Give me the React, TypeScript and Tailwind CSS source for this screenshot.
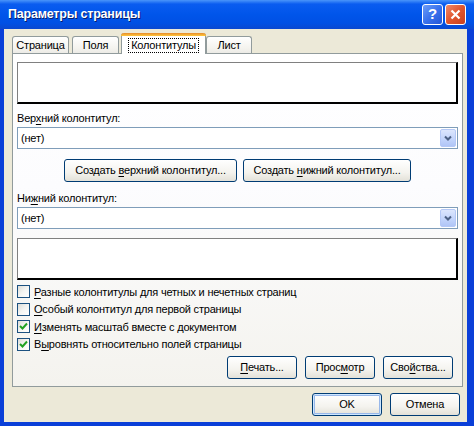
import React from "react";

const font = "font-['Liberation_Sans',Arial,sans-serif]";

function U({ children }: { children: React.ReactNode }) {
  return <span className="underline underline-offset-2">{children}</span>;
}

function XpButton({
  children,
  className = "",
  isDefault = false,
}: {
  children: React.ReactNode;
  className?: string;
  isDefault?: boolean;
}) {
  return (
    <div
      className={`flex h-[23px] items-center justify-center rounded-[3px] border border-[#003C74] bg-[linear-gradient(180deg,#FFFFFF_0%,#F4F3EE_60%,#E3E1D8_100%)] text-[11px] text-black ${
        isDefault ? "shadow-[inset_0_0_0_1px_#CEE7FF,inset_0_0_0_2px_#98B8EA]" : ""
      } ${className}`}
    >
      <span>{children}</span>
    </div>
  );
}

function XpSelect() {
  return (
    <div className="flex h-[22px] w-[441px] items-center border border-[#7F9DB9] bg-white pl-[3px] pr-[1px]">
      <span className="flex-1 text-[11px] text-black">(нет)</span>
      <div className="flex h-[18px] w-[16px] items-center justify-center rounded-[2px] border border-[#B4C8F6] bg-[linear-gradient(180deg,#DCE6FD_0%,#C1D3FB_60%,#B0C5F6_100%)]">
        <svg width="8" height="6" viewBox="0 0 8 6">
          <path d="M1 1.5 L4 4.5 L7 1.5" fill="none" stroke="#4D6185" strokeWidth="2" />
        </svg>
      </div>
    </div>
  );
}

function Preview() {
  return (
    <div className="h-[42px] w-[441px] border-l border-t border-[#808080] border-r-2 border-b-2 border-r-black border-b-black bg-white" />
  );
}

function Checkbox({ checked, children }: { checked?: boolean; children: React.ReactNode }) {
  return (
    <div className="flex h-[17.5px] items-center gap-[4px]">
      <div className="flex h-[13px] w-[13px] items-center justify-center border border-[#1C5180] bg-[linear-gradient(135deg,#DCDCD7_0%,#F5F5F2_50%,#FFFFFF_100%)]">
        {checked && (
          <svg width="9" height="9" viewBox="0 0 9 9">
            <path d="M1 4 L3.5 6.5 L8 1.5" fill="none" stroke="#21A121" strokeWidth="2" />
          </svg>
        )}
      </div>
      <span className="text-[11px] text-black">{children}</span>
    </div>
  );
}

function Tab({ label, active, className = "" }: { label: string; active?: boolean; className?: string }) {
  if (active) {
    return (
      <div className={`relative z-10 -mb-[1px] flex h-[21px] flex-col rounded-t-[3px] border-x border-[#919B9C] bg-white ${className}`}>
        <div className="-mx-[1px] h-[3px] rounded-t-[3px] bg-[linear-gradient(180deg,#E68B2C,#FFC83C)]" />
        <div className="flex flex-1 items-center justify-center">
          <span className="border border-dotted border-black px-[2px] text-[11px] leading-[13px] text-black">
            {label}
          </span>
        </div>
      </div>
    );
  }
  return (
    <div
      className={`flex h-[17px] items-center justify-center rounded-t-[3px] border-x border-t border-[#919B9C] bg-[linear-gradient(180deg,#FFFFFF_0%,#F4F3EE_70%,#ECEBE6_100%)] text-[11px] text-black ${className}`}
    >
      {label}
    </div>
  );
}

export default function App() {
  return (
    <div className={`flex h-[426px] w-[474px] flex-col bg-[#0A3FD8] ${font}`}>
      {/* Title bar */}
      <div className="flex h-[29px] items-center bg-[linear-gradient(180deg,#4A95FA_0%,#0A5CF0_14%,#0055EA_50%,#0050E4_80%,#0A48D0_100%)] pl-[8px] pr-[8px]">
        <span className="flex-1 text-[12.5px] font-bold tracking-[-0.2px] text-white [text-shadow:1px_1px_0_#0A1E6A]">
          Параметры страницы
        </span>
        <div className="flex gap-[2px]">
          <div className="flex h-[21px] w-[21px] items-center justify-center rounded-[3px] border border-white bg-[linear-gradient(135deg,#6D9DF8_0%,#3A72EC_50%,#2356D8_100%)] text-[15px] font-bold text-white">
            ?
          </div>
          <div className="flex h-[21px] w-[21px] items-center justify-center rounded-[3px] border border-white bg-[linear-gradient(135deg,#F08A6A_0%,#E0552E_50%,#C8401E_100%)]">
            <svg width="11" height="11" viewBox="0 0 11 11">
              <path d="M1.5 1.5 L9.5 9.5 M9.5 1.5 L1.5 9.5" stroke="white" strokeWidth="2.2" />
            </svg>
          </div>
        </div>
      </div>

      {/* Body */}
      <div className="mb-[4px] ml-[4px] mr-[7px] flex flex-1 flex-col bg-[#ECE9D8] pl-[8px] pt-[4px] tracking-[-0.2px]">
        {/* Tabs */}
        <div className="flex items-end">
          <Tab label="Страница" className="w-[57px]" />
          <Tab label="Поля" className="ml-[3px] w-[47px]" />
          <Tab label="Колонтитулы" active className="ml-[2px] w-[85px]" />
          <Tab label="Лист" className="w-[46px]" />
        </div>

        {/* Panel */}
        <div className="flex h-[334px] w-[451px] flex-col border border-[#919B9C] bg-[linear-gradient(180deg,#FFFFFF_0%,#FCFCFE_40%,#F4F3EE_100%)] pl-[4px] pt-[8px]">
          <Preview />
          <div className="mt-[7px] h-[14px] text-[11px] leading-[14px] text-black">
            Вер<U>х</U>ний колонтитул:
          </div>
          <div className="mt-[2px]">
            <XpSelect />
          </div>
          <div className="mt-[10px] flex gap-[6px] pl-[47px]">
            <XpButton className="w-[173px]">
              Создать <U>в</U>ерхний колонтитул...
            </XpButton>
            <XpButton className="w-[168px]">
              Создать <U>н</U>ижний колонтитул...
            </XpButton>
          </div>
          <div className="mt-[9px] h-[14px] text-[11px] leading-[14px] text-black">
            Ни<U>ж</U>ний колонтитул:
          </div>
          <div className="mt-[2px]">
            <XpSelect />
          </div>
          <div className="mt-[9px]">
            <Preview />
          </div>
          <div className="mt-[3px] flex flex-col">
            <Checkbox>
              <U>Р</U>азные колонтитулы для четных и нечетных страниц
            </Checkbox>
            <Checkbox>
              <U>О</U>собый колонтитул для первой страницы
            </Checkbox>
            <Checkbox checked>
              <U>И</U>зменять масштаб вместе с документом
            </Checkbox>
            <Checkbox checked>
              В<U>ы</U>ровнять относительно полей страницы
            </Checkbox>
          </div>
          <div className="mt-[3px] flex gap-[8px] pl-[210px]">
            <XpButton className="w-[70px]">
              <U>П</U>ечать...
            </XpButton>
            <XpButton className="w-[70px]">
              Прос<U>м</U>отр
            </XpButton>
            <XpButton className="w-[70px]">
              Сво<U>й</U>ства...
            </XpButton>
          </div>
        </div>

        {/* Footer buttons */}
        <div className="mt-[6px] flex gap-[8px] pl-[300px]">
          <XpButton className="w-[70px]" isDefault>
            OK
          </XpButton>
          <XpButton className="w-[70px]">Отмена</XpButton>
        </div>
      </div>
    </div>
  );
}
